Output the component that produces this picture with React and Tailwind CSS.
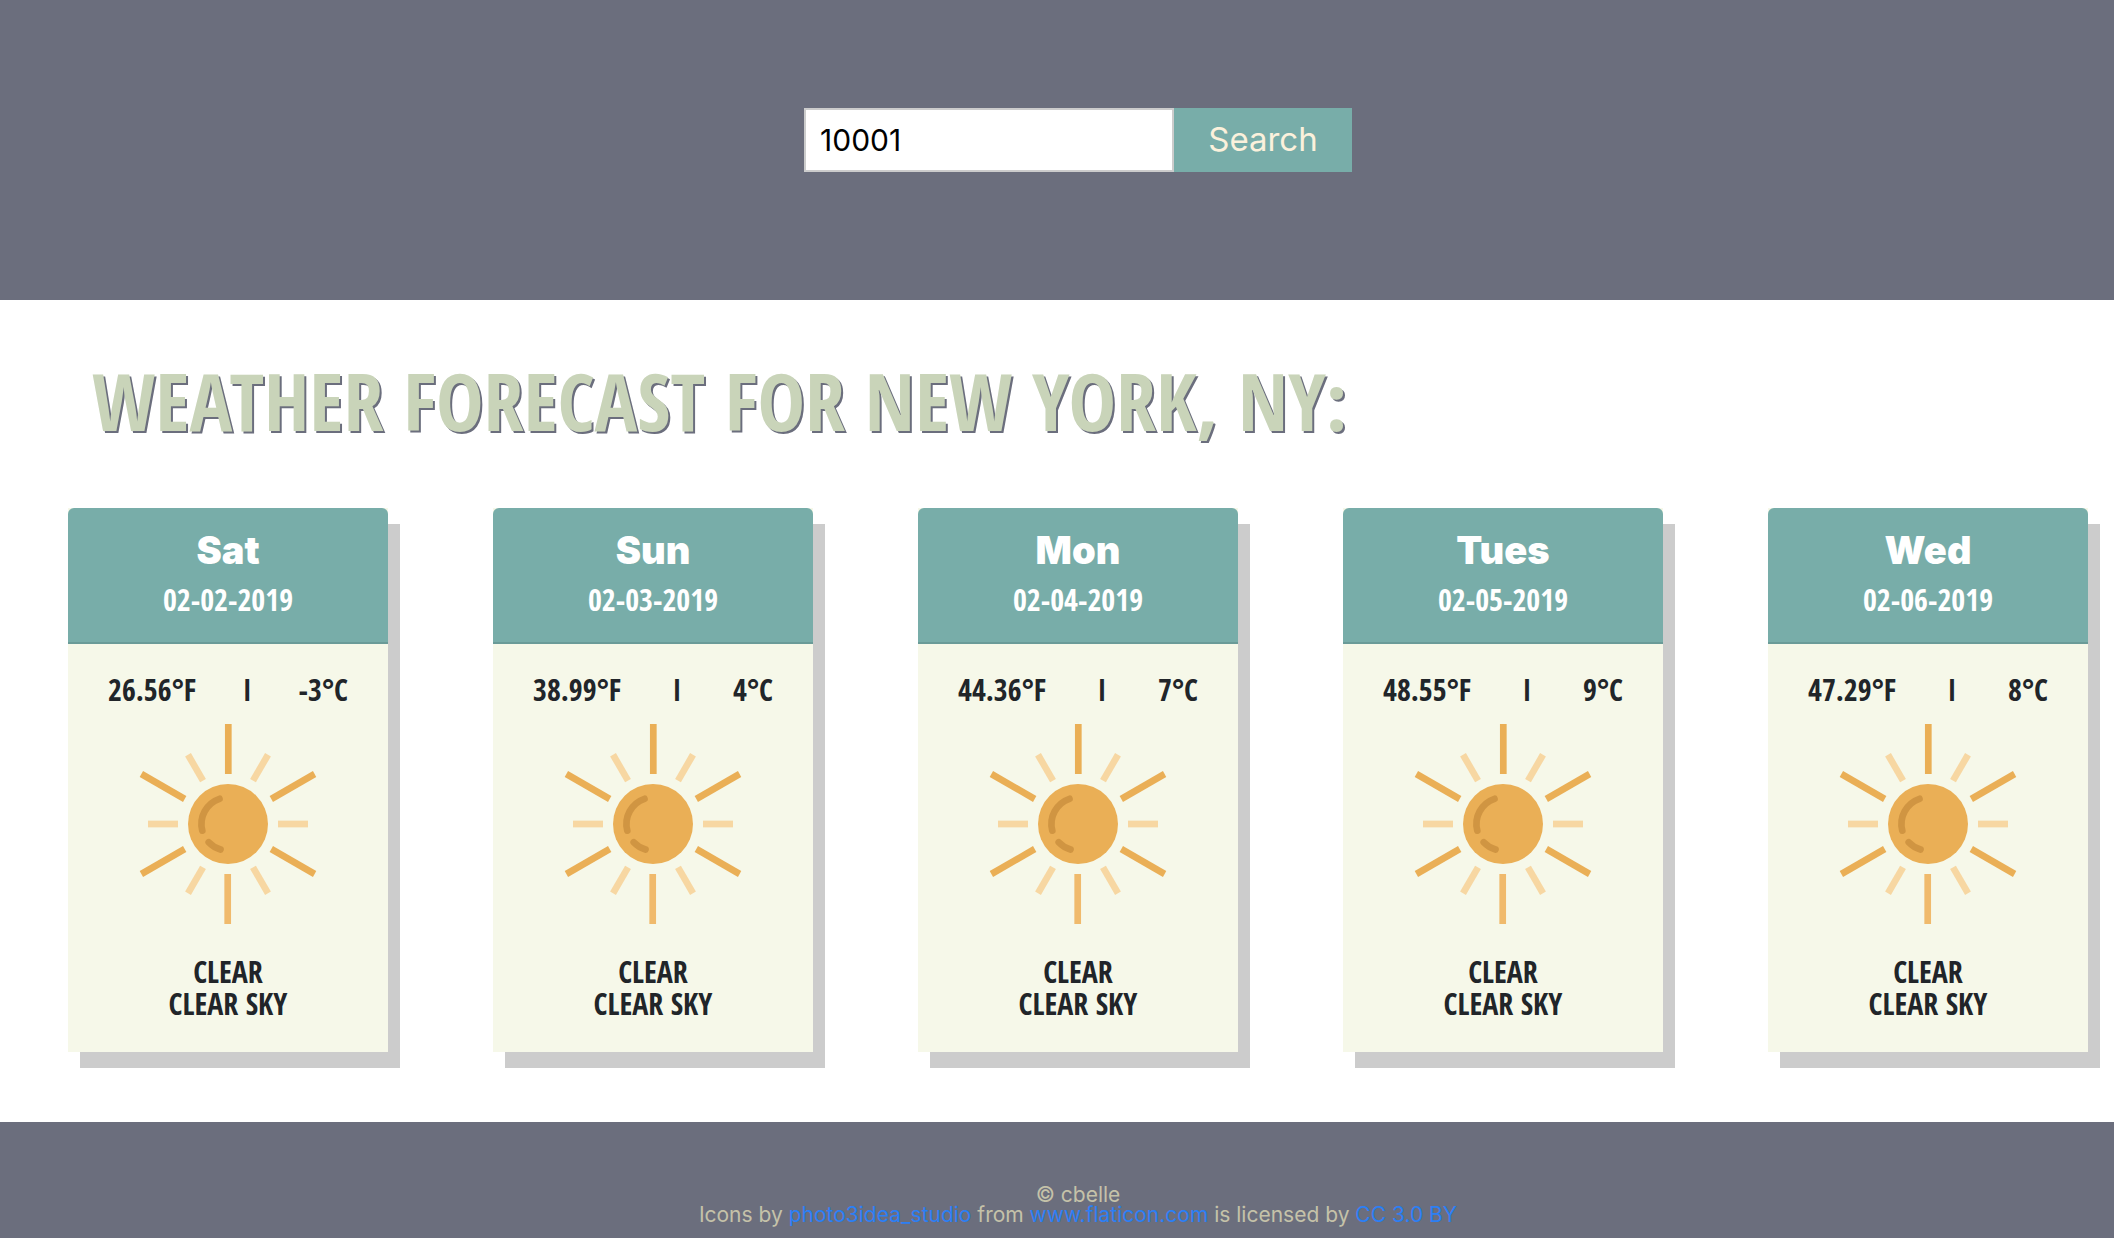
import React from "react";

const days = [
  { day: "Sat", date: "02-02-2019", f: "26.56°F", c: "-3°C" },
  { day: "Sun", date: "02-03-2019", f: "38.99°F", c: "4°C" },
  { day: "Mon", date: "02-04-2019", f: "44.36°F", c: "7°C" },
  { day: "Tues", date: "02-05-2019", f: "48.55°F", c: "9°C" },
  { day: "Wed", date: "02-06-2019", f: "47.29°F", c: "8°C" },
];

function SunIcon() {
  return (
    <svg viewBox="0 0 200 200" className="mx-auto size-[200px]" role="img" aria-label="Sun">
      <g stroke="#EAAF56" strokeWidth="6.7">
        <path d="M100.3 0V50" />
        <path d="M100 0V50" transform="rotate(60 100 100)" />
        <path d="M100 0V50" transform="rotate(120 100 100)" />
        <path d="M99.7 150V200" stroke="#F0BA6C" />
        <path d="M100 0V50" transform="rotate(240 100 100)" />
        <path d="M100 0V50" transform="rotate(300 100 100)" />
      </g>
      <g stroke="#F7D7A2" strokeWidth="6.7">
        <path d="M100 20V50" transform="rotate(30 100 100)" />
        <path d="M100 20V50" transform="rotate(90 100 100)" />
        <path d="M100 20V50" transform="rotate(150 100 100)" />
        <path d="M100 20V50" transform="rotate(210 100 100)" />
        <path d="M100 20V50" transform="rotate(270 100 100)" />
        <path d="M100 20V50" transform="rotate(330 100 100)" />
      </g>
      <circle cx="100" cy="100" r="40" fill="#EAAF56" />
      <g fill="none" stroke="#D09542" strokeWidth="6.7" strokeLinecap="round">
        <path d="M91.5 74.8A26.6 26.6 0 0 0 74.3 106.7" />
        <path d="M80.7 118.2A26.6 26.6 0 0 0 92.5 125.5" />
      </g>
    </svg>
  );
}

function DayCard({ day, date, f, c }) {
  return (
    <article className="w-80 bg-[#F6F8E9] text-center font-['Open_Sans_Condensed','Open_Sans',sans-serif] text-[30px] leading-8 font-bold text-[#212529] shadow-[12px_16px_0_#ccc]">
      <header className="rounded-t-md border-b-2 border-[#6A9B98] bg-[#78ADA9] pt-5 pb-6 text-white">
        <h2 className="font-['Inter',sans-serif] text-[38px] leading-11 font-black">{day}</h2>
        <p className="pt-3 pb-0.5">{date}</p>
      </header>
      <div className="flex justify-between px-10 pt-[30px] pb-[18px]">
        <span>{f}</span>
        <span>I</span>
        <span>{c}</span>
      </div>
      <SunIcon />
      <p className="pt-8 uppercase">Clear</p>
      <p className="pb-8 uppercase">Clear sky</p>
    </article>
  );
}

export default function App() {
  return (
    <div className="flex min-h-screen flex-col bg-[#6B6E7D] font-['Inter',sans-serif]">
      <header className="flex justify-center pt-27 pb-32 pl-[42px]">
        <form className="flex h-16" onSubmit={(e) => e.preventDefault()}>
          <input
            type="text"
            aria-label="Zip code"
            defaultValue="10001"
            className="w-[370px] border-2 border-[#ccc] bg-white px-3.5 text-[30px] text-black outline-none"
          />
          <button type="submit" className="w-[178px] bg-[#78ADA9] pb-0.5 text-[33px] leading-10 text-[#FBF1DC]">
            Search
          </button>
        </form>
      </header>

      <main className="bg-white pt-11 pr-[26px] pb-[70px] pl-[68px]">
        <h1 className="mb-13 pl-6 font-['Open_Sans_Condensed','Open_Sans',sans-serif] text-[80px] leading-28 font-bold text-[#C9D4B9] uppercase [text-shadow:2px_2px_#6B6E7D]">
          Weather forecast for New York, NY:
        </h1>
        <section className="flex justify-between">
          {days.map((d) => (
            <DayCard key={d.day} {...d} />
          ))}
        </section>
      </main>

      <footer className="pt-[63px] pl-[42px] text-center text-[21px] leading-5 text-[#C5C2A9]">
        <p>© cbelle</p>
        <p>
          Icons by <a href="#author" className="text-[#2B7FF5]">photo3idea_studio</a> from{" "}
          <a href="#flaticon" className="text-[#2B7FF5]">www.flaticon.com</a> is licensed by{" "}
          <a href="#license" className="text-[#2B7FF5]">CC 3.0 BY</a>
        </p>
      </footer>
    </div>
  );
}
